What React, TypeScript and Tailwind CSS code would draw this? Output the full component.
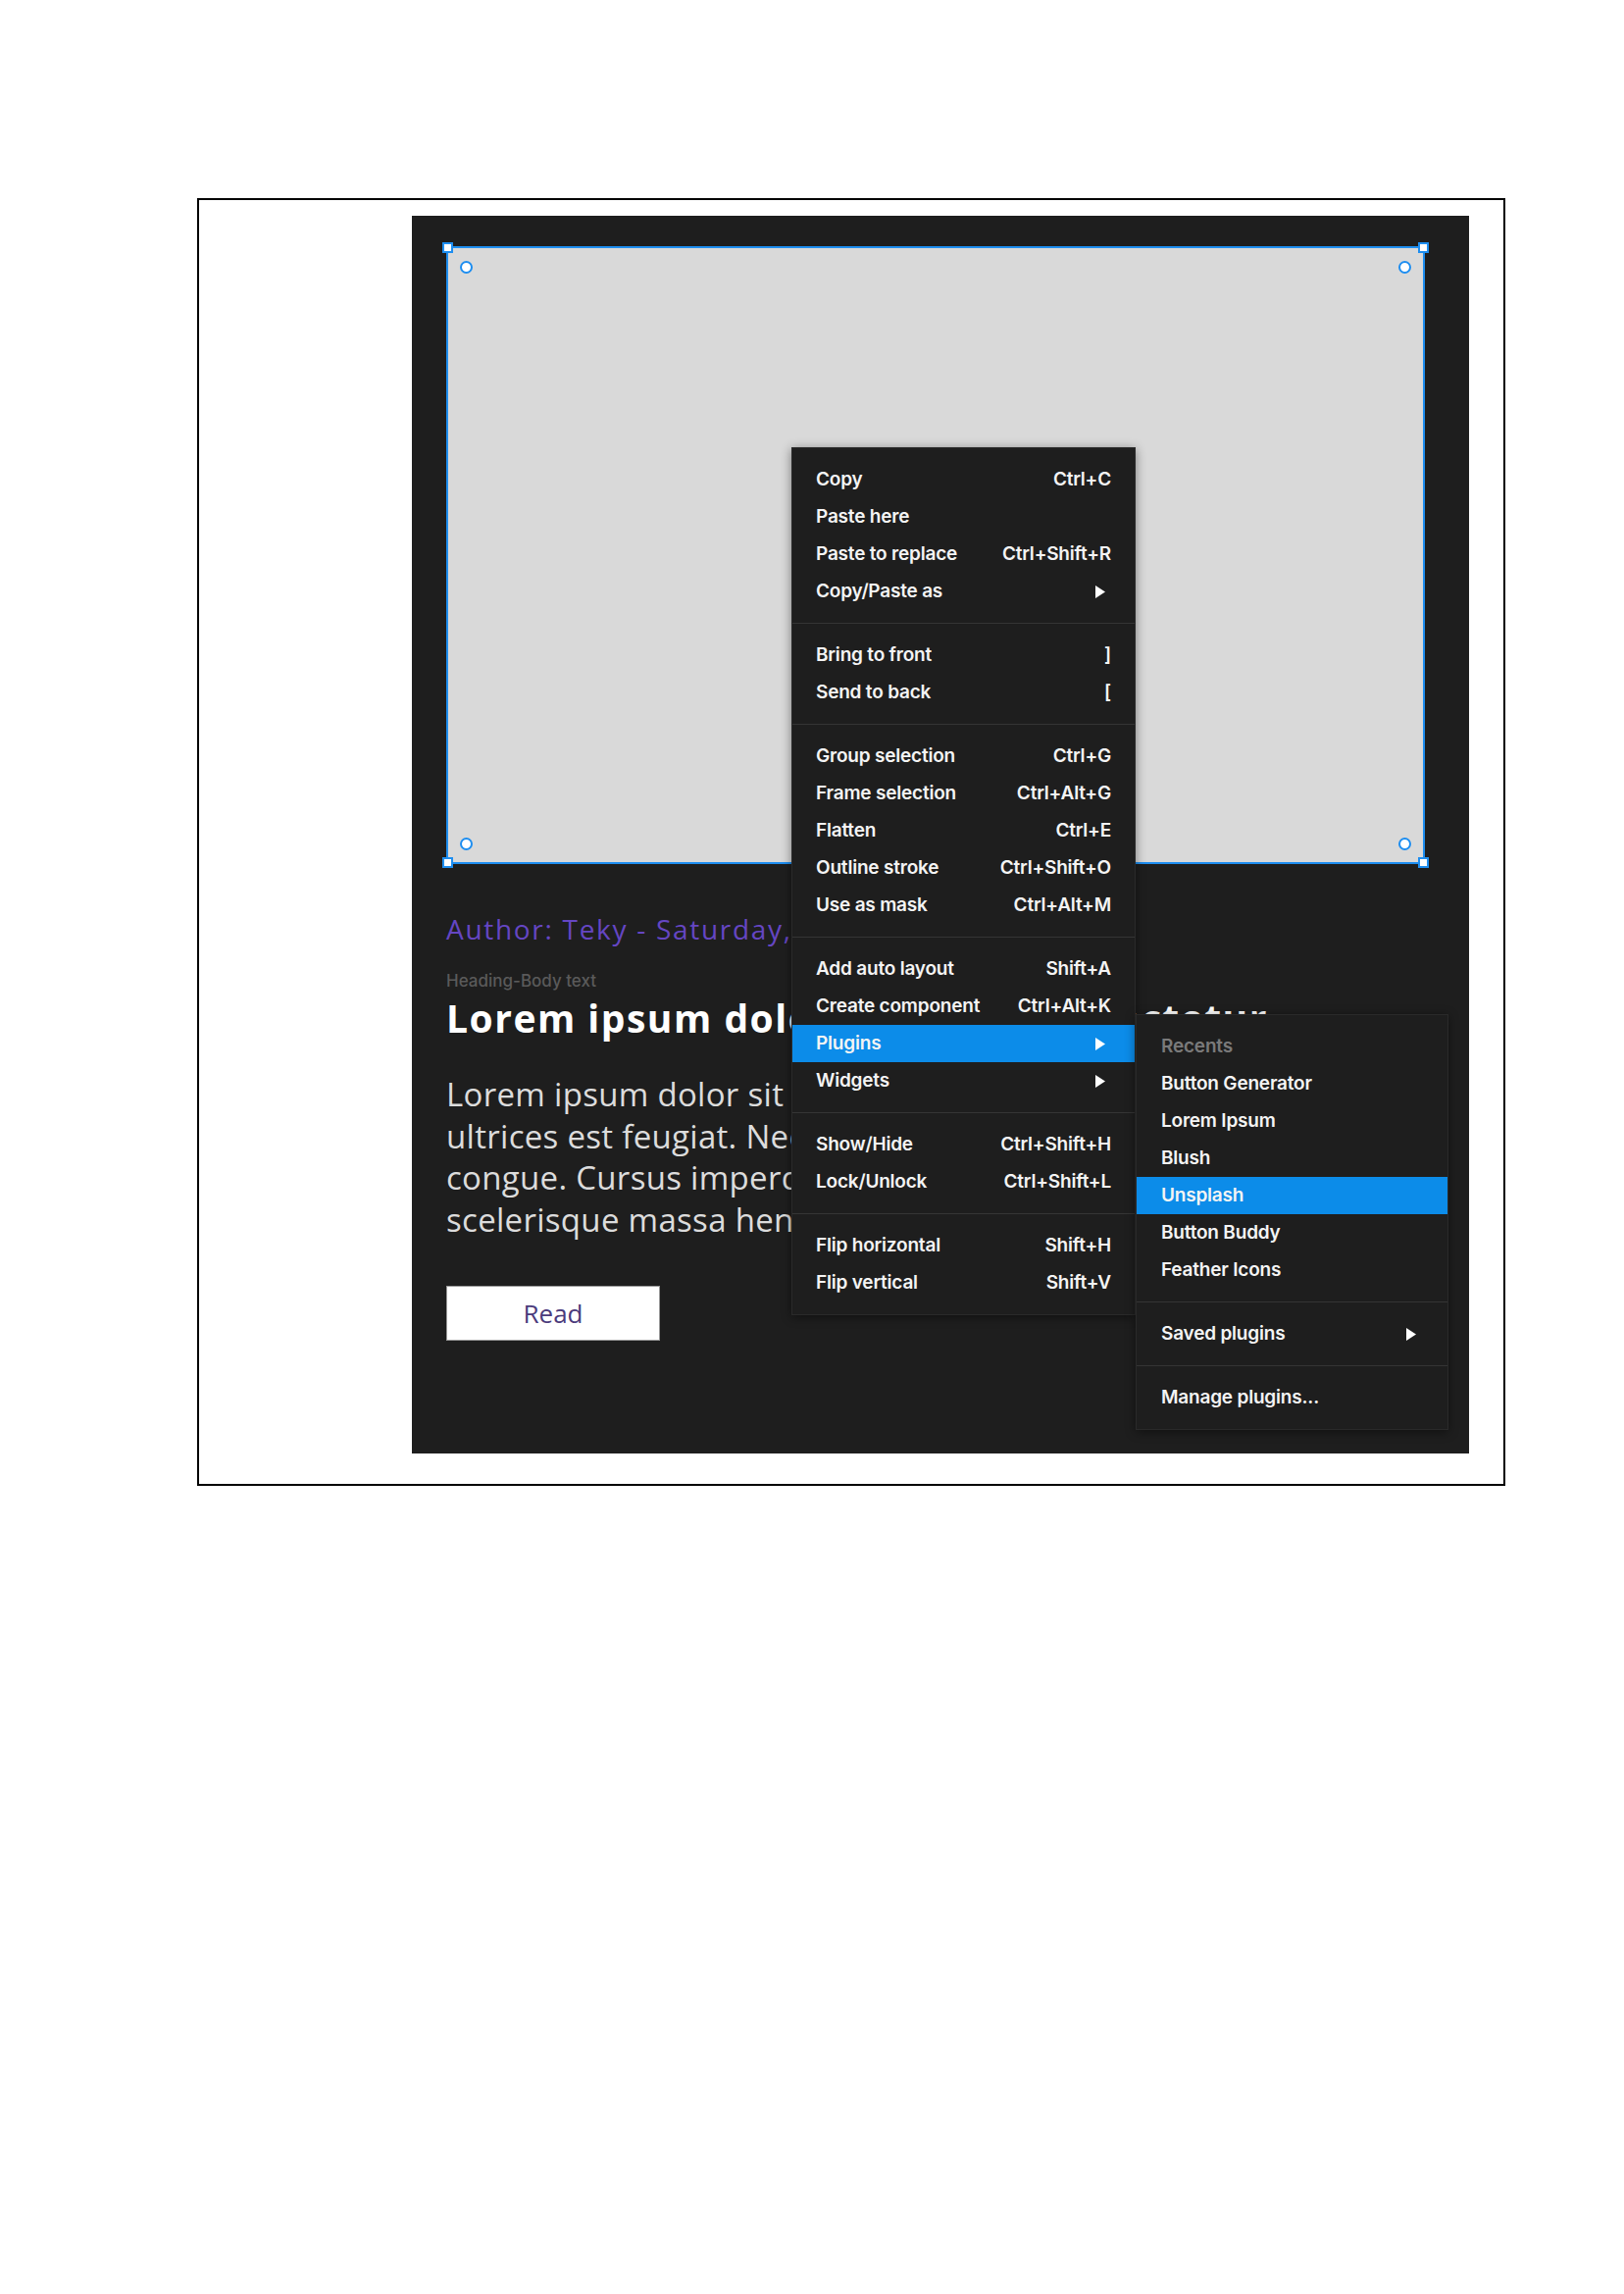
import React from 'react'

type Item = { label: string; shortcut?: string; arrow?: boolean; active?: boolean; muted?: boolean }

const mainMenu: Item[][] = [
  [
    { label: 'Copy', shortcut: 'Ctrl+C' },
    { label: 'Paste here' },
    { label: 'Paste to replace', shortcut: 'Ctrl+Shift+R' },
    { label: 'Copy/Paste as', arrow: true },
  ],
  [
    { label: 'Bring to front', shortcut: ']' },
    { label: 'Send to back', shortcut: '[' },
  ],
  [
    { label: 'Group selection', shortcut: 'Ctrl+G' },
    { label: 'Frame selection', shortcut: 'Ctrl+Alt+G' },
    { label: 'Flatten', shortcut: 'Ctrl+E' },
    { label: 'Outline stroke', shortcut: 'Ctrl+Shift+O' },
    { label: 'Use as mask', shortcut: 'Ctrl+Alt+M' },
  ],
  [
    { label: 'Add auto layout', shortcut: 'Shift+A' },
    { label: 'Create component', shortcut: 'Ctrl+Alt+K' },
    { label: 'Plugins', arrow: true, active: true },
    { label: 'Widgets', arrow: true },
  ],
  [
    { label: 'Show/Hide', shortcut: 'Ctrl+Shift+H' },
    { label: 'Lock/Unlock', shortcut: 'Ctrl+Shift+L' },
  ],
  [
    { label: 'Flip horizontal', shortcut: 'Shift+H' },
    { label: 'Flip vertical', shortcut: 'Shift+V' },
  ],
]

const pluginMenu: Item[][] = [
  [
    { label: 'Recents', muted: true },
    { label: 'Button Generator' },
    { label: 'Lorem Ipsum' },
    { label: 'Blush' },
    { label: 'Unsplash', active: true },
    { label: 'Button Buddy' },
    { label: 'Feather Icons' },
  ],
  [{ label: 'Saved plugins', arrow: true }],
  [{ label: 'Manage plugins...' }],
]

function Arrow() {
  return (
    <svg width="10" height="13" viewBox="0 0 10 13" className="mr-[6px]">
      <path d="M0 0 L10 6.5 L0 13 Z" fill="#ffffff" />
    </svg>
  )
}

function Menu({ sections, sub }: { sections: Item[][]; sub?: boolean }) {
  return (
    <div className="bg-[#1e1e1e] border border-[#2a2a2a] shadow-[0_2px_10px_rgba(0,0,0,0.45)] font-['Inter','Liberation_Sans',sans-serif] text-[19px] font-semibold tracking-[-0.2px] text-[#f4f4f4]">
      {sections.map((section, i) => (
        <div key={i} className={`py-[13px] ${i > 0 ? 'border-t border-[#353535]' : ''}`}>
          {section.map((item) => (
            <div
              key={item.label}
              className={`flex items-center justify-between h-[38px] ${sub ? 'pl-[25px] pr-[26px]' : 'pl-[24px] pr-[24px]'} ${
                item.active ? 'bg-[#0c8ce9]' : ''
              }`}
            >
              <span className={item.muted ? 'text-[#7a7a7a]' : ''}>{item.label}</span>
              {item.shortcut && <span>{item.shortcut}</span>}
              {item.arrow && <Arrow />}
            </div>
          ))}
        </div>
      ))}
    </div>
  )
}

export default function App() {
  return (
    <div className="min-h-[2339px] w-[1656px] bg-white pt-[202px] pl-[201px]">
      <div className="w-[1334px] h-[1313px] border-2 border-black pt-[16px] pl-[217px]">
        <div className="relative w-[1078px] h-[1262px] bg-[#1e1e1e] overflow-hidden pt-[31px] pl-[35px] pr-[45px] font-['Open_Sans','Lato',sans-serif]">
          {/* selected frame */}
          <div className="relative h-[630px] bg-[#d9d9d9] border-2 border-[#1e8ef0]">
            <span className="absolute -left-[6px] -top-[6px] w-[11px] h-[11px] bg-white border-2 border-[#1e8ef0]" />
            <span className="absolute -right-[6px] -top-[6px] w-[11px] h-[11px] bg-white border-2 border-[#1e8ef0]" />
            <span className="absolute -left-[6px] -bottom-[6px] w-[11px] h-[11px] bg-white border-2 border-[#1e8ef0]" />
            <span className="absolute -right-[6px] -bottom-[6px] w-[11px] h-[11px] bg-white border-2 border-[#1e8ef0]" />
            <span className="absolute left-[12px] top-[13px] w-[13px] h-[13px] rounded-full bg-white border-2 border-[#1e8ef0]" />
            <span className="absolute right-[12px] top-[13px] w-[13px] h-[13px] rounded-full bg-white border-2 border-[#1e8ef0]" />
            <span className="absolute left-[12px] bottom-[12px] w-[13px] h-[13px] rounded-full bg-white border-2 border-[#1e8ef0]" />
            <span className="absolute right-[12px] bottom-[12px] w-[13px] h-[13px] rounded-full bg-white border-2 border-[#1e8ef0]" />
          </div>

          {/* card text */}
          <div className="flex flex-col items-start">
            <div className="mt-[48px] text-[28px] leading-[36px] tracking-[1.7px] text-[#6546c3] whitespace-nowrap">
              Author: Teky - Saturday, 12 March 2022
            </div>
            <div className="mt-[24px] text-[17px] leading-[22px] font-medium text-[#5a5a5a] font-['Inter',sans-serif]">
              Heading-Body text
            </div>
            <div className="mt-[3px] text-[39px] leading-[48px] font-bold tracking-[1.5px] text-white whitespace-nowrap">
              Lorem ipsum dolor sit amet consectetur
            </div>
            <div className="mt-[33px] text-[33px] leading-[42.5px] tracking-[0.3px] text-[#dcdcdc] whitespace-nowrap">
              Lorem ipsum dolor sit amet, consectetur
              <br />
              ultrices est feugiat. Nec sit amet nunc
              <br />
              congue. Cursus imperdiet vitae lacus
              <br />
              scelerisque massa hendrerit.
            </div>
            <button className="mt-[46px] w-[218px] h-[56px] bg-white text-[26px] text-[#4b3b7c] border border-[#999]">
              Read
            </button>
          </div>

          {/* context menu */}
          <div className="absolute left-[387px] top-[236px] w-[351px]">
            <Menu sections={mainMenu} />
          </div>
          <div className="absolute left-[738px] top-[814px] w-[319px]">
            <Menu sections={pluginMenu} sub />
          </div>
        </div>
      </div>
    </div>
  )
}
